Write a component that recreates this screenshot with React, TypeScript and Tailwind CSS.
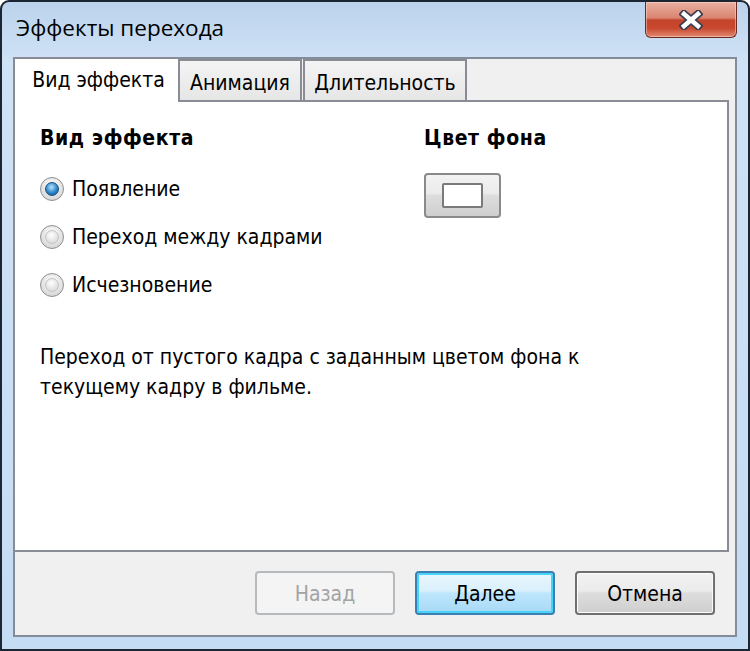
import React from "react";

const body = "font-['DejaVu_Sans_Condensed','DejaVu_Sans',sans-serif]";

function Radio({ checked, label }: { checked?: boolean; label: string }) {
    return (
        <div className="flex h-[24px] items-center">
            <div className="flex h-[24px] w-[24px] items-center justify-center rounded-full border border-[#8e8f8f] bg-[radial-gradient(circle_at_50%_35%,#ffffff,#dcdcdc_70%,#c8c8c8)]">
                <div
                    className={
                        checked
                            ? "h-[14px] w-[14px] rounded-full border border-[#1d4f7c] bg-[radial-gradient(circle_at_45%_35%,#b9e4ff,#2a86c8_55%,#174d86)]"
                            : "h-[14px] w-[14px] rounded-full border border-[#c3c3c3] bg-[radial-gradient(circle_at_45%_35%,#ffffff,#e3e3e3_60%,#d3d3d3)]"
                    }
                />
            </div>
            <span className="ml-[8px] text-[21px] leading-[24px] text-black">{label}</span>
        </div>
    );
}

function Button({
    label,
    variant,
}: {
    label: string;
    variant: "disabled" | "default" | "normal";
}) {
    const styles = {
        disabled:
            "border-[#b7babc] bg-[#f4f4f4] text-[#a3a3a3]",
        default:
            "border-[#3c7fb1] bg-[linear-gradient(#eaf6fd,#d9f0fc_45%,#bee6fd_50%,#a7d9f5)] text-black shadow-[inset_0_0_0_2px_#48d4f9]",
        normal:
            "border-[#707070] bg-[linear-gradient(#f2f2f2,#ebebeb_45%,#dddddd_50%,#cfcfcf)] text-black shadow-[inset_0_0_0_1px_#fcfcfc]",
    }[variant];
    return (
        <div
            className={`flex h-[44px] w-[140px] items-center justify-center rounded-[4px] border-2 pt-[4px] text-[21px] ${styles}`}
        >
            {label}
        </div>
    );
}

export default function App() {
    return (
        <div className="h-[651px] w-[750px] rounded-t-[9px] bg-[#1c2633] p-[2px]">
            <div className="flex h-full flex-col rounded-t-[7px] bg-[linear-gradient(#bcd3ec,#cfe2f6_60px,#c4dcf4)] px-[11px] pb-[12px]">
                {/* Title bar */}
                <div className="relative flex h-[55px] items-center">
                    <span className="pl-[3px] pb-[3px] font-['Open_Sans',sans-serif] text-[22.5px] text-black">
                        Эффекты перехода
                    </span>
                    <div className="absolute right-0 top-0 flex h-[36px] w-[92px] items-center justify-center rounded-b-[6px] border border-t-0 border-[#6b2a22] bg-[linear-gradient(#eab0a2,#d98571_45%,#c4432b_52%,#c9482f_75%,#df8a72)] shadow-[inset_0_0_0_1px_rgba(255,220,210,0.5)]">
                        <svg width="24" height="20" viewBox="0 0 24 20">
                            <path
                                d="M5 4 L19 16 M19 4 L5 16"
                                stroke="#3b3f4f"
                                strokeWidth="8"
                                strokeLinecap="square"
                            />
                            <path
                                d="M5 4 L19 16 M19 4 L5 16"
                                stroke="#ffffff"
                                strokeWidth="4.5"
                                strokeLinecap="square"
                            />
                        </svg>
                    </div>
                </div>

                {/* Client area */}
                <div className={`flex flex-1 flex-col border-2 border-[#838c97] bg-[#f0f0f0] ${body}`}>
                    <div className="-ml-[2px] -mt-[2px] mr-[6px] flex flex-1 flex-col">
                        {/* Tabs */}
                        <div className="flex h-[43px] items-end">
                            <div className="relative z-10 -mb-[2px] flex h-[45px] w-[167px] items-center justify-center border-2 border-b-0 border-[#898c95] bg-white pl-[4px] text-[21px] text-black">
                                Вид эффекта
                            </div>
                            <div className="flex h-[41px] w-[122px] items-center justify-center border-2 border-b-0 border-l-0 border-[#898c95] bg-[linear-gradient(#f4f4f4,#e6e6e6)] pt-[7px] text-[21px] text-black">
                                Анимация
                            </div>
                            <div className="ml-[1px] flex h-[41px] w-[164px] items-center justify-center border-2 border-b-0 border-[#898c95] bg-[linear-gradient(#f4f4f4,#e6e6e6)] pt-[7px] text-[21px] text-black">
                                Длительность
                            </div>
                        </div>

                        {/* Panel */}
                        <div className="flex h-[452px] flex-col border-2 border-[#898c95] bg-white pl-[25px] pt-[24px]">
                            <div className="flex">
                                <div className="w-[384px]">
                                    <div className="text-[21px] font-bold leading-[24px] tracking-[0.6px] text-black">
                                        Вид эффекта
                                    </div>
                                    <div className="mt-[27px] flex flex-col gap-[24px]">
                                        <Radio checked label="Появление" />
                                        <Radio label="Переход между кадрами" />
                                        <Radio label="Исчезновение" />
                                    </div>
                                </div>
                                <div>
                                    <div className="text-[21px] font-bold leading-[24px] tracking-[0.6px] text-black">
                                        Цвет фона
                                    </div>
                                    <div className="mt-[23px] flex h-[45px] w-[77px] items-center justify-center rounded-[4px] border-2 border-[#8a8a8a] bg-[linear-gradient(#f2f2f2,#ebebeb_45%,#dddddd_50%,#cfcfcf)]">
                                        <div className="h-[25px] w-[41px] rounded-[2px] border-2 border-[#7a7a7a] bg-white" />
                                    </div>
                                </div>
                            </div>
                            <p className="mt-[45px] text-[21px] leading-[30px] text-black">
                                Переход от пустого кадра с заданным цветом фона к
                                <br />
                                текущему кадру в фильме.
                            </p>
                        </div>

                        {/* Buttons */}
                        <div className="flex flex-1 items-center justify-end gap-[20px] pb-[1px] pr-[14px]">
                            <Button label="Назад" variant="disabled" />
                            <Button label="Далее" variant="default" />
                            <Button label="Отмена" variant="normal" />
                        </div>
                    </div>
                </div>
            </div>
        </div>
    );
}
